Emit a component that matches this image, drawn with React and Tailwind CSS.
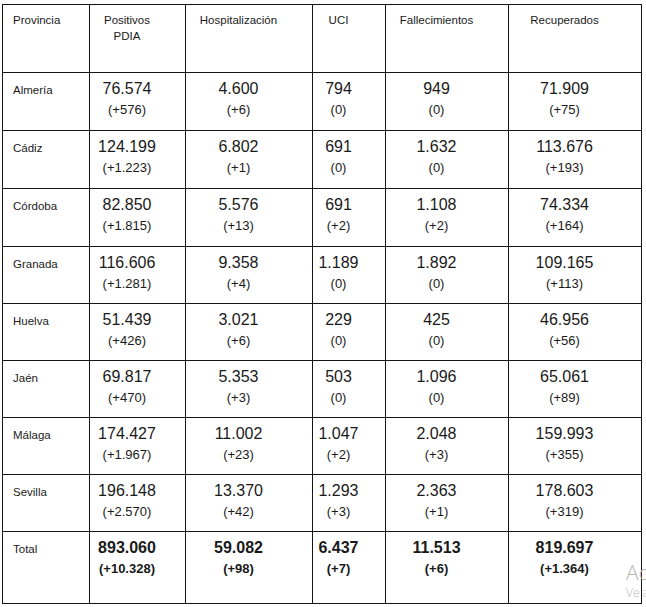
import React from "react";

const rows = [
  { name: "Almería", cells: [["76.574", "(+576)"], ["4.600", "(+6)"], ["794", "(0)"], ["949", "(0)"], ["71.909", "(+75)"]] },
  { name: "Cádiz", cells: [["124.199", "(+1.223)"], ["6.802", "(+1)"], ["691", "(0)"], ["1.632", "(0)"], ["113.676", "(+193)"]] },
  { name: "Córdoba", cells: [["82.850", "(+1.815)"], ["5.576", "(+13)"], ["691", "(+2)"], ["1.108", "(+2)"], ["74.334", "(+164)"]] },
  { name: "Granada", cells: [["116.606", "(+1.281)"], ["9.358", "(+4)"], ["1.189", "(0)"], ["1.892", "(0)"], ["109.165", "(+113)"]] },
  { name: "Huelva", cells: [["51.439", "(+426)"], ["3.021", "(+6)"], ["229", "(0)"], ["425", "(0)"], ["46.956", "(+56)"]] },
  { name: "Jaén", cells: [["69.817", "(+470)"], ["5.353", "(+3)"], ["503", "(0)"], ["1.096", "(0)"], ["65.061", "(+89)"]] },
  { name: "Málaga", cells: [["174.427", "(+1.967)"], ["11.002", "(+23)"], ["1.047", "(+2)"], ["2.048", "(+3)"], ["159.993", "(+355)"]] },
  { name: "Sevilla", cells: [["196.148", "(+2.570)"], ["13.370", "(+42)"], ["1.293", "(+3)"], ["2.363", "(+1)"], ["178.603", "(+319)"]] },
];

const total = [["893.060", "(+10.328)"], ["59.082", "(+98)"], ["6.437", "(+7)"], ["11.513", "(+6)"], ["819.697", "(+1.364)"]];

const headers = [["Positivos", "PDIA"], ["Hospitalización"], ["UCI"], ["Fallecimientos"], ["Recuperados"]];

const NameCell = ({ children }) => (
  <div className="bg-white pl-[10px] pt-[9px] text-[11.5px] leading-[16px]">{children}</div>
);

const ValueCell = ({ value, delta, bold }) => (
  <div className={`bg-white pr-[21px] pt-[6px] text-center ${bold ? "font-bold" : ""}`}>
    <div className="text-[16px] leading-[20px]">{value}</div>
    <div className="mt-[2px] text-[13px] leading-[18px]">{delta}</div>
  </div>
);

export default function App() {
  return (
    <div className="relative h-[607px] w-[646px] overflow-hidden bg-white pl-[2px] pt-[4px] font-['Liberation_Sans',Arial,sans-serif] text-[#1a1a1a]">
      <div className="grid w-[640px] grid-cols-[86px_95px_126px_72px_122px_132px] grid-rows-[67px_57px_57px_57px_56px_56px_56px_56px_56px_71px] gap-px bg-[#151515] p-px">
        {/* header */}
        <div className="bg-white pl-[10px] pt-[7px] text-[11.5px] leading-[16px]">Provincia</div>
        {headers.map((h) => (
          <div key={h[0]} className="bg-white pr-[21px] pt-[7px] text-center text-[11.5px] leading-[16px]">
            {h.map((line) => (
              <div key={line}>{line}</div>
            ))}
          </div>
        ))}

        {/* provincias */}
        {rows.map((row) => (
          <React.Fragment key={row.name}>
            <NameCell>{row.name}</NameCell>
            {row.cells.map(([v, d], i) => (
              <ValueCell key={i} value={v} delta={d} />
            ))}
          </React.Fragment>
        ))}

        {/* total */}
        <NameCell>Total</NameCell>
        {total.map(([v, d], i) => (
          <ValueCell key={i} value={v} delta={d} bold />
        ))}
      </div>

      {/* watermark */}
      <div className="pointer-events-none absolute left-[626px] top-[559px] whitespace-nowrap font-['Open_Sans',sans-serif] font-light text-[#b8b8b8]">
        <div className="text-[21px] leading-[26px]">Activar Windows</div>
        <div className="text-[12px] leading-[16px]">Ve a Configuración</div>
      </div>
    </div>
  );
}
